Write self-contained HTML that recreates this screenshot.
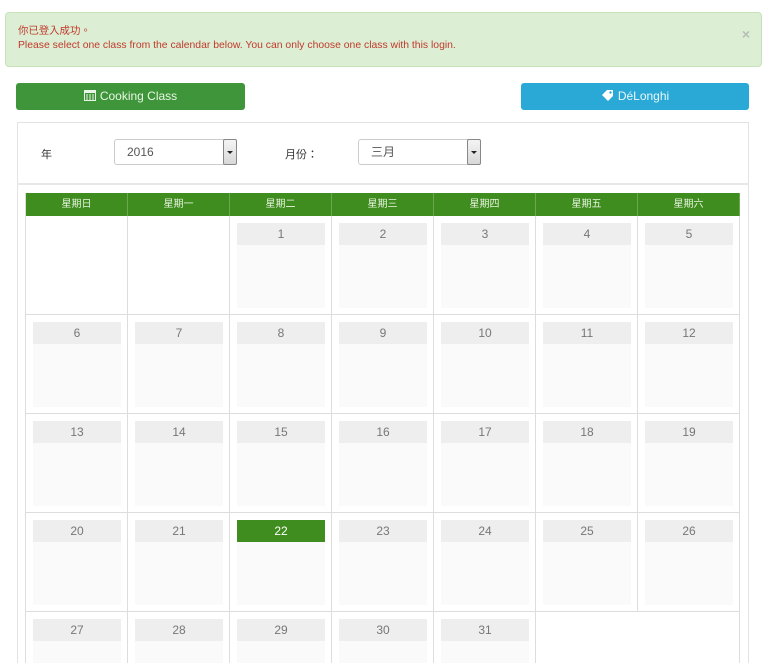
<!DOCTYPE html>
<html style="overflow:hidden;height:663px"><head><meta charset="utf-8">
<style>
*{box-sizing:border-box;margin:0;padding:0}
body{width:768px;height:663px;overflow:hidden;background:#fff;font-family:"Liberation Sans","Noto Sans CJK TC",sans-serif;position:relative}
.alert{position:absolute;left:5px;top:12px;width:757px;height:55px;background:#dcefd4;border:1px solid #c7e2b8;border-radius:4px;color:#c0392b;font-size:10.4px;line-height:14px;padding:12px 12px}
.alert .x{position:absolute;right:11px;top:14px;color:#b7bfb4;font-size:14px;font-weight:bold}
.btn{position:absolute;top:83px;height:27px;border-radius:3px;color:#e9f5e6;font-size:12px;line-height:27px;text-align:center}
.g{left:16px;width:229px;background:#3f963a}
.b{left:521px;width:228px;background:#2aa9d6;color:#eaf7fc}
.panel{position:absolute;left:17px;top:122px;width:732px;height:541px;border:1px solid #e3e3e3;border-bottom:none}
.filter{position:absolute;left:17px;top:122px;width:732px;height:63px;border-bottom:2px solid #e8e8e8}
.lbl{position:absolute;font-size:11px;color:#333}
.sel{position:absolute;height:26px;border:1px solid #ccc;border-radius:3px;font-size:12px;color:#555;line-height:24px;padding-left:12px;background:#fff}
.sel i{position:absolute;right:-1px;top:-1px;width:14px;height:26px;border:1px solid #888;background:linear-gradient(#f4f4f4,#d8d8d8);border-radius:2px}
.sel i:after{content:"";position:absolute;left:3px;top:11px;border:3px solid transparent;border-top:3px solid #222}
.cal{position:absolute;left:25px;top:193px;display:grid;grid-template-columns:repeat(7,102px);grid-template-rows:23px repeat(4,99px) 51px;border-left:1px solid #ddd;background:#fff;overflow:hidden}
.h{background:#3f8c1f;color:#e8f3e0;font-size:10px;text-align:center;line-height:23px;border-right:1px solid #6aa84f}
.c{border-right:1px solid #ddd;border-bottom:1px solid #ddd;position:relative;overflow:hidden}
.last .c,.c.last{border-bottom:none}
.c b{position:absolute;left:7px;top:7px;width:88px;height:22px;background:#eee;font-weight:normal;font-size:12px;color:#777;text-align:center;line-height:22px}
.c s{position:absolute;left:7px;top:29px;width:88px;height:63px;background:#fafafa}
.c b.t{background:#3f8c1f;color:#fff}
</style></head><body>
<div class="alert">你已登入成功。<br>Please select one class from the calendar below. You can only choose one class with this login.<span class="x">×</span></div>
<div class="btn g"><svg width="12" height="12" viewBox="0 0 12 12" style="vertical-align:-1px;margin-right:4px"><rect x="0.5" y="1.5" width="11" height="10" fill="none" stroke="#e9f5e6"/><rect x="0.5" y="1.5" width="11" height="2.5" fill="#e9f5e6"/><path d="M2 6h2M5 6h2M8 6h2M2 8h2M5 8h2M8 8h2M2 10h2M5 10h2M8 10h2" stroke="#e9f5e6"/></svg>Cooking Class</div>
<div class="btn b"><svg width="13" height="12" viewBox="0 0 13 12" style="vertical-align:-1px;margin-right:4px"><path d="M1 6L6 1h6v6l-5 5z" fill="#fff"/><circle cx="9.5" cy="3.5" r="1.2" fill="#2aa9d6"/></svg>DéLonghi</div>
<div class="panel"></div>
<div class="filter"></div>
<div class="lbl" style="left:41px;top:146px">年</div>
<div class="sel" style="left:114px;top:139px;width:123px">2016<i></i></div>
<div class="lbl" style="left:285px;top:146px">月份：</div>
<div class="sel" style="left:358px;top:139px;width:123px">三月<i></i></div>
<div class="cal">
<div class="h">星期日</div><div class="h">星期一</div><div class="h">星期二</div><div class="h">星期三</div><div class="h">星期四</div><div class="h">星期五</div><div class="h">星期六</div>
<div class="c"></div><div class="c"></div>
<div class="c"><b>1</b><s></s></div><div class="c"><b>2</b><s></s></div><div class="c"><b>3</b><s></s></div><div class="c"><b>4</b><s></s></div><div class="c"><b>5</b><s></s></div>
<div class="c"><b>6</b><s></s></div><div class="c"><b>7</b><s></s></div><div class="c"><b>8</b><s></s></div><div class="c"><b>9</b><s></s></div><div class="c"><b>10</b><s></s></div><div class="c"><b>11</b><s></s></div><div class="c"><b>12</b><s></s></div>
<div class="c"><b>13</b><s></s></div><div class="c"><b>14</b><s></s></div><div class="c"><b>15</b><s></s></div><div class="c"><b>16</b><s></s></div><div class="c"><b>17</b><s></s></div><div class="c"><b>18</b><s></s></div><div class="c"><b>19</b><s></s></div>
<div class="c"><b>20</b><s></s></div><div class="c"><b>21</b><s></s></div><div class="c"><b class="t">22</b><s></s></div><div class="c"><b>23</b><s></s></div><div class="c"><b>24</b><s></s></div><div class="c"><b>25</b><s></s></div><div class="c"><b>26</b><s></s></div>
<div class="c last"><b>27</b><s></s></div><div class="c last"><b>28</b><s></s></div><div class="c last"><b>29</b><s></s></div><div class="c last"><b>30</b><s></s></div><div class="c last"><b>31</b><s></s></div><div class="c last" style="grid-column:span 2"></div>
</div>
</body></html>
